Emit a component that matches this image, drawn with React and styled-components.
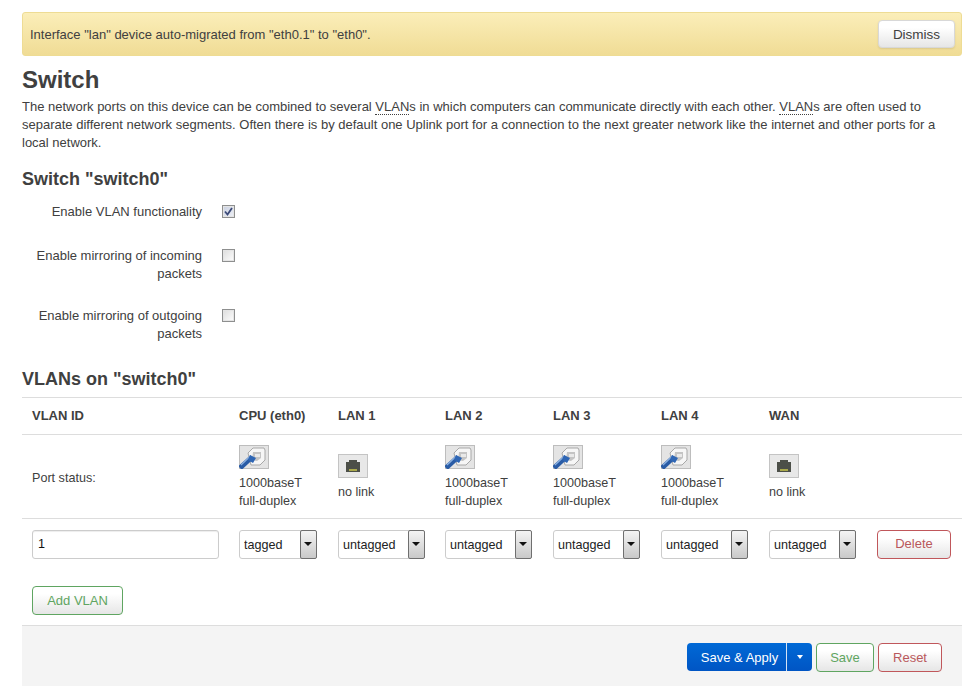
import React from "react";
import styled, { createGlobalStyle, css } from "styled-components";

const GlobalStyle = createGlobalStyle`
  html, body {
    margin: 0;
    padding: 0;
    background: #fff;
    overflow: hidden;
  }
  body {
    font-family: "Liberation Sans", Arial, sans-serif;
    font-size: 13px;
    color: #404040;
  }
`;

const Page = styled.div`
  width: 940px;
  height: 686px;
  padding: 12px 7px 0 22px;
  overflow: hidden;
`;

const Alert = styled.div`
  display: flex;
  align-items: center;
  justify-content: space-between;
  height: 42px;
  padding: 0 6px 0 7px;
  border: 1px solid #eedc94;
  border-radius: 3px;
  background: linear-gradient(#fbeeb9, #f0dc95);
  font-size: 13px;
  color: #404040;
`;

const buttonBase = css`
  font-family: "Liberation Sans", Arial, sans-serif;
  border-radius: 4px;
  background: linear-gradient(#fff, #fff 25%, #e6e6e6);
  padding: 0;
`;

const DismissButton = styled.button`
  ${buttonBase};
  width: 77px;
  height: 28px;
  border: 1px solid #d8d8d8;
  font-size: 13.5px;
  color: #404040;
  box-shadow: 0 1px 2px rgba(0, 0, 0, 0.1);
`;

const Title = styled.h2`
  margin: 9px 0 0;
  font-size: 24px;
  line-height: 30px;
  font-weight: 700;
  color: #404040;
`;

const Description = styled.p`
  margin: 3px 0 0;
  font-size: 13px;
  line-height: 18px;
  color: #404040;
`;

const Abbr = styled.abbr`
  text-decoration: none;
  border-bottom: 1px dotted #404040;
`;

const SectionTitle = styled.h3`
  margin: ${(props) => props.$top}px 0 0;
  font-size: 18px;
  line-height: 24px;
  font-weight: 700;
  color: #404040;
`;

const Options = styled.div`
  display: flex;
  flex-direction: column;
  margin-top: 12px;
`;

const OptionRow = styled.label`
  display: grid;
  grid-template-columns: 180px 14px;
  column-gap: 20px;
  align-items: start;
  height: ${(props) => props.$height}px;
  font-size: 13px;
  line-height: 18px;
  text-align: right;
`;

const CheckBox = styled.span`
  position: relative;
  display: block;
  box-sizing: border-box;
  width: 13px;
  height: 13px;
  margin-top: 2px;
  border: 1px solid #8e8f8f;
  background: ${(props) =>
    props.$checked
      ? "linear-gradient(135deg, #c9d0e0, #eef0f6)"
      : "linear-gradient(135deg, #dcdcdc, #fdfdfd)"};
  box-shadow: inset 0 0 0 1px #e4e4e4;
`;

const CheckMark = styled.svg`
  position: absolute;
  left: 1px;
  top: 1px;
`;

const VlanTable = styled.div`
  margin-top: 6px;
  border-top: 1px solid #ddd;
`;

const TableRow = styled.div`
  display: grid;
  grid-template-columns: 207px 99px 107px 108px 108px 108px 108px 85px;
  align-items: center;
  height: ${(props) => props.$height}px;
  padding-left: 10px;
  border-bottom: ${(props) => (props.$plain ? "none" : "1px solid #ddd")};
  box-sizing: border-box;
`;

const HeadCell = styled.div`
  padding-bottom: 2px;
  font-size: 13px;
  font-weight: 700;
  color: #404040;
`;

const StatusLabel = styled.div`
  padding-top: 2px;
  font-size: 12.6px;
`;

const PortCell = styled.div`
  display: flex;
  flex-direction: column;
  align-items: flex-start;
  padding-top: 1px;
  font-size: 12.6px;
  line-height: 18px;
  color: #404040;
`;

const PortCaption = styled.div`
  margin-top: 5px;
`;

const IconFrame = styled.svg`
  display: block;
`;

const VlanInput = styled.input`
  box-sizing: border-box;
  width: 187px;
  height: 29px;
  padding: 0 5px;
  border: 1px solid #ccc;
  border-radius: 3px;
  font-family: "Liberation Sans", Arial, sans-serif;
  font-size: 12.6px;
  color: #111;
  box-shadow: inset 0 1px 1px rgba(0, 0, 0, 0.075);
  outline: none;
`;

const SelectWrap = styled.div`
  position: relative;
  box-sizing: border-box;
  width: ${(props) => props.$width}px;
  height: 29px;
  border: 1px solid #ccc;
  border-radius: 3px;
  background: #fff;
`;

const SelectField = styled.select`
  appearance: none;
  width: 100%;
  height: 100%;
  padding: 2px 0 0 4px;
  border: none;
  background: transparent;
  font-family: "Liberation Sans", Arial, sans-serif;
  font-size: 12.6px;
  color: #222;
  outline: none;
`;

const SelectArrow = styled.span`
  position: absolute;
  top: -1px;
  right: -1px;
  box-sizing: border-box;
  width: 17px;
  height: 29px;
  border: 1px solid #6f6f6f;
  border-radius: 2px;
  background: linear-gradient(#f4f4f4, #c9c9c9);
  &::after {
    content: "";
    position: absolute;
    left: 3px;
    top: 11px;
    border-left: 4px solid transparent;
    border-right: 4px solid transparent;
    border-top: 4px solid #111;
  }
`;

const OutlineButton = styled.button`
  ${buttonBase};
  width: ${(props) => props.$width}px;
  height: 29px;
  padding-bottom: ${(props) => props.$lift || 0}px;
  border: 1px solid ${(props) => (props.$tone === "green" ? "#5fa561" : "#c0575b")};
  color: ${(props) => (props.$tone === "green" ? "#5fa561" : "#b9585c")};
  font-size: 13px;
`;

const AddRow = styled.div`
  padding: 17px 0 10px 10px;
  height: 29px;
`;

const ActionBar = styled.div`
  display: flex;
  justify-content: flex-end;
  align-items: flex-start;
  gap: 4px;
  height: 60px;
  padding: 17px 20px 0 0;
  border-top: 1px solid #ddd;
  background: #f4f4f4;
`;

const SplitButton = styled.div`
  display: flex;
  height: 28px;
  border-radius: 4px;
  background: linear-gradient(#0069d6, #0055c4);
  color: #fff;
  font-size: 13px;
`;

const SplitMain = styled.div`
  display: flex;
  align-items: center;
  justify-content: center;
  box-sizing: border-box;
  width: 100px;
  padding-left: 6px;
  border-right: 1px solid #d5e3f5;
`;

const SplitCaret = styled.div`
  width: 25px;
  display: flex;
  align-items: center;
  justify-content: center;
  &::after {
    content: "";
    border-left: 3px solid transparent;
    border-right: 3px solid transparent;
    border-top: 4px solid #fff;
  }
`;

const ports = [
  { name: "CPU (eth0)", up: true, mode: "tagged", width: 78 },
  { name: "LAN 1", up: false, mode: "untagged", width: 87 },
  { name: "LAN 2", up: true, mode: "untagged", width: 87 },
  { name: "LAN 3", up: true, mode: "untagged", width: 87 },
  { name: "LAN 4", up: true, mode: "untagged", width: 87 },
  { name: "WAN", up: false, mode: "untagged", width: 87 },
];

function PortUpIcon() {
  return (
    <IconFrame width="30" height="24" viewBox="0 0 30 24">
      <rect x="0.5" y="0.5" width="29" height="23" fill="#e4e4e4" stroke="#bdbdbd" />
      <path d="M9 8 L14 3 L25 3 L26 5 L26 15 L21 20 L12 20 Z" fill="#f6f6f6" stroke="#a8a8a8" />
      <path d="M14 7 L22 7 L22 13 L18 16 L13 15 Z" fill="#c4c4c4" />
      <path d="M16 9 L21 9 L21 12 L16 12 Z" fill="#e9e9e9" />
      <path d="M1 23 L13 12" stroke="#2a5ca6" strokeWidth="5" />
      <path d="M2 20 L12 10.5" stroke="#8db2e0" strokeWidth="1.2" />
      <path d="M11 10 L17 13 L14 18 L9 15 Z" fill="#2f66b4" />
    </IconFrame>
  );
}

function PortDownIcon() {
  return (
    <IconFrame width="30" height="24" viewBox="0 0 30 24">
      <rect x="0.5" y="0.5" width="29" height="23" fill="#e8e8e8" stroke="#c4c4c4" />
      <path d="M8 8 H11 V6 H19 V8 H22 V18 H8 Z" fill="#4c4f48" />
      <rect x="11" y="15" width="8" height="2" fill="#a9a84a" />
    </IconFrame>
  );
}

export default function App() {
  return (
    <Page>
      <GlobalStyle />
      <Alert>
        <span>Interface "lan" device auto-migrated from "eth0.1" to "eth0".</span>
        <DismissButton>Dismiss</DismissButton>
      </Alert>

      <Title>Switch</Title>
      <Description>
        The network ports on this device can be combined to several <Abbr>VLAN</Abbr>s in which computers can
        communicate directly with each other. <Abbr>VLAN</Abbr>s are often used to separate different network
        segments. Often there is by default one Uplink port for a connection to the next greater network like the
        internet and other ports for a local network.
      </Description>

      <SectionTitle $top={15}>Switch "switch0"</SectionTitle>
      <Options>
        <OptionRow $height={44}>
          <span>Enable VLAN functionality</span>
          <CheckBox $checked>
            <CheckMark width="9" height="9" viewBox="0 0 9 9">
              <path d="M1 4.5 L3.5 7.5 L8 1" fill="none" stroke="#3c4a78" strokeWidth="1.8" />
            </CheckMark>
          </CheckBox>
        </OptionRow>
        <OptionRow $height={60}>
          <span>Enable mirroring of incoming packets</span>
          <CheckBox />
        </OptionRow>
        <OptionRow $height={60}>
          <span>Enable mirroring of outgoing packets</span>
          <CheckBox />
        </OptionRow>
      </Options>

      <SectionTitle $top={0}>VLANs on "switch0"</SectionTitle>
      <VlanTable>
        <TableRow $height={37}>
          <HeadCell>VLAN ID</HeadCell>
          {ports.map((port) => (
            <HeadCell key={port.name}>{port.name}</HeadCell>
          ))}
        </TableRow>
        <TableRow $height={84}>
          <StatusLabel>Port status:</StatusLabel>
          {ports.map((port) => (
            <PortCell key={port.name}>
              {port.up ? <PortUpIcon /> : <PortDownIcon />}
              {port.up ? (
                <PortCaption>
                  1000baseT
                  <br />
                  full-duplex
                </PortCaption>
              ) : (
                <PortCaption>no link</PortCaption>
              )}
            </PortCell>
          ))}
        </TableRow>
        <TableRow $height={50} $plain>
          <VlanInput defaultValue="1" />
          {ports.map((port) => (
            <SelectWrap key={port.name} $width={port.width}>
              <SelectField defaultValue={port.mode}>
                <option value="tagged">tagged</option>
                <option value="untagged">untagged</option>
                <option value="off">off</option>
              </SelectField>
              <SelectArrow />
            </SelectWrap>
          ))}
          <OutlineButton $tone="red" $width={74} $lift={2}>Delete</OutlineButton>
        </TableRow>
      </VlanTable>

      <AddRow>
        <OutlineButton $tone="green" $width={91}>Add VLAN</OutlineButton>
      </AddRow>

      <ActionBar>
        <SplitButton>
          <SplitMain>Save &amp; Apply</SplitMain>
          <SplitCaret />
        </SplitButton>
        <OutlineButton $tone="green" $width={58}>Save</OutlineButton>
        <OutlineButton $tone="red" $width={64}>Reset</OutlineButton>
      </ActionBar>
    </Page>
  );
}
